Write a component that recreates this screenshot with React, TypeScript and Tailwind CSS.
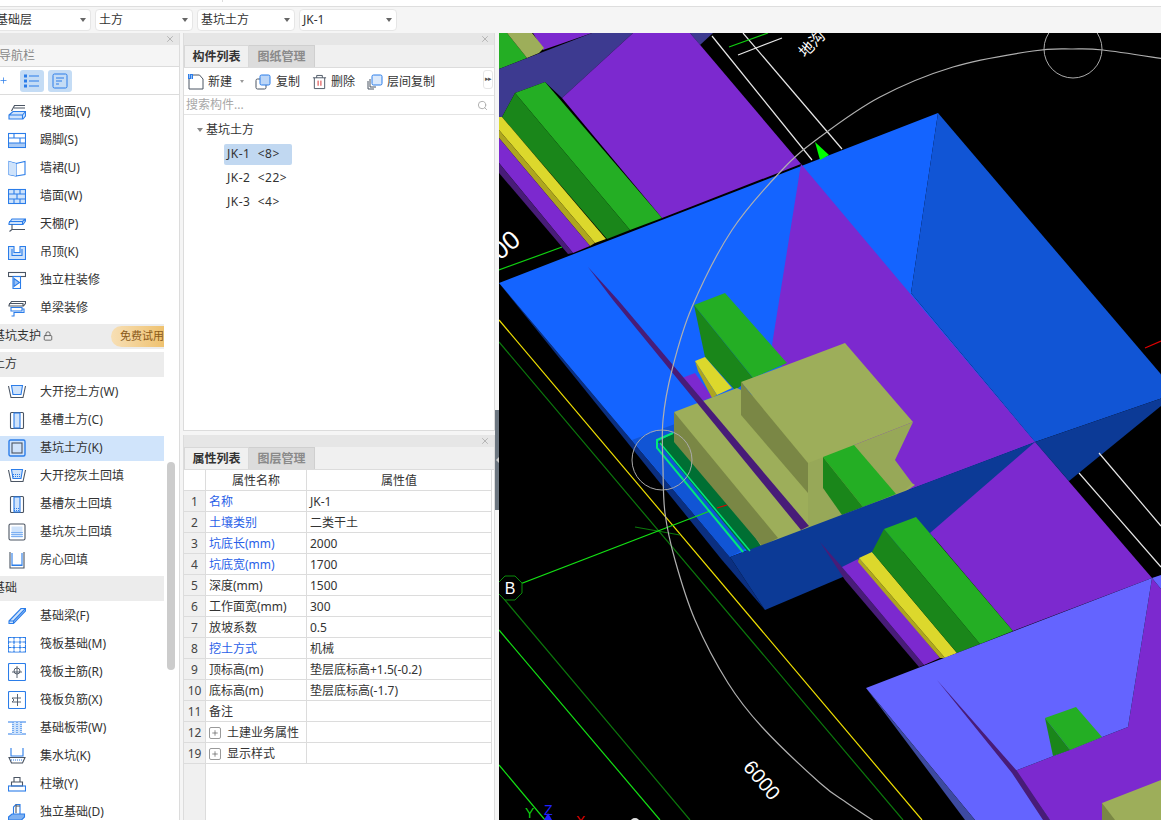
import { ReactNode } from 'react';
import { X, Search, Lock, Plus } from 'lucide-react';

const B = '#2b7de9';
const D = '#4b5563';
const L = '#cfe3fb';

const FONT = "font-['Noto_Sans','Noto_Sans_CJK_SC',sans-serif]";

function Ic({ children }: { children: ReactNode }) {
    return (
        <svg viewBox="0 0 18 18" fill="none" strokeWidth="1.1" className="w-[18px] h-[18px] shrink-0">
            {children}
        </svg>
    );
}

const dots = (x: number, y: number, w: number, h: number) => {
    const out: ReactNode[] = [];
    for (let i = 0; i < w; i += 2) for (let j = 0; j < h; j += 2) out.push(<rect key={`${i}-${j}`} x={x + i} y={y + j} width="1" height="1" fill={B} />);
    return out;
};

const icons: Record<string, ReactNode> = {
    floor: <><path d="M17 2.5H6.5L3.5 8M6 5H17" stroke={D} /><path d="M1 12L5 8.5H17.5V13L15 16H1ZM1 12H14.5V16M14.5 12L17.5 8.5" stroke={B} fill={L} /></>,
    skirt: <><rect x="0.5" y="2.5" width="17" height="14" stroke={B} /><rect x="1" y="12" width="16" height="4" fill="#a9caf5" /><path d="M0.5 7H17.5M0.5 12H17.5M6 2.5V7M12 7V12" stroke={B} /></>,
    dado: <><path d="M1 2.5L8 4.5V17L1 15.5ZM8 4.5L17 2.5V15.5L8 17" stroke={B} /><path d="M1 2.5L8 4.5V17L1 15.5Z" fill={L} /></>,
    wall: <><rect x="0.5" y="2.5" width="17" height="14" stroke={B} fill={L} /><path d="M0.5 7H17.5M0.5 12H17.5M6 2.5V7M12 2.5V7M9 7V12M6 12V16.5M12 12V16.5" stroke={B} /></>,
    ceil: <><path d="M1 8L4 4H17.5V6L15 9.5H1ZM1 6.5H14.5V9M14.5 6.5L17.5 4" stroke={B} fill={L} /><path d="M4 9.5V14.5L1.5 16.5M4 14.5H17" stroke={D} /></>,
    susp: <><path d="M0.5 3.5H6V9.5H12V3.5H17.5V16.5H0.5Z" stroke={B} fill={L} /><path d="M4 6V12.5H14V6" stroke={B} /></>,
    colf: <><rect x="0.5" y="1.5" width="17" height="4" stroke={D} /><rect x="5" y="5.5" width="7.5" height="12" stroke={B} /><path d="M6 7.5L11.5 11.5L6 15.5Z" fill="#9cc3f5" stroke={B} /></>,
    beamf: <><path d="M1 6L3.5 2.5H17.5V4.5L15.5 7H1ZM1 4.5H15V6.5" stroke={D} /><path d="M3 8.5H14V12H3ZM14 10H16V13.5H6V17H3.5" stroke={B} /></>,
    open: <><path d="M0.5 3L3 14.5H15L17.5 3" stroke={D} /><path d="M3.5 2.5H14.5L13 11.5H5Z" fill={L} stroke={B} /></>,
    trench: <><rect x="2.5" y="1.5" width="13" height="16" rx="1" stroke={D} /><rect x="6" y="2" width="6" height="15" fill={L} stroke={B} /></>,
    pit: <><rect x="1" y="1" width="16" height="16" rx="1.5" stroke={B} strokeWidth="1.4" fill={L} /><rect x="4" y="4" width="10" height="10" stroke={D} /></>,
    openf: <><path d="M0.5 3L3 14.5H15L17.5 3" stroke={D} /><path d="M3.5 2.5H14.5L13 11.5H5Z" fill={L} stroke={B} />{dots(5, 7, 8, 4)}</>,
    trenchf: <><rect x="2.5" y="1.5" width="13" height="16" rx="1" stroke={D} /><rect x="6" y="2" width="6" height="15" fill={L} stroke={B} />{dots(6, 13, 6, 4)}</>,
    pitf: <><rect x="1" y="1" width="16" height="16" rx="1.5" stroke={D} /><rect x="3.5" y="3.5" width="11" height="11" fill={L} />{dots(3.5, 9, 11, 6)}</>,
    room: <><path d="M2 1V17H16V1" stroke={D} /><path d="M4 2V14.5H14V2" stroke={B} />{dots(4.5, 13, 9, 2)}</>,
    beam: <><path d="M1 14L13 1.5H17.5V4L5.5 16.5H1ZM1 14H5.5V16.5M5.5 14L17.5 1.5" stroke={B} fill={L} /></>,
    raft: <><path d="M0.5 2.5H17.5V17H0.5ZM0.5 7H17.5M0.5 12.5H17.5M6 2.5V17M12 2.5V17" stroke={B} /><path d="M4 2.5V17M8 2.5V17M10 2.5V17M14 2.5V17M0.5 5H17.5M0.5 9.5H17.5M0.5 15H17.5" stroke="#fff" strokeWidth="0.7" /></>,
    raftm: <><rect x="0.5" y="0.5" width="17" height="17" rx="1" stroke={B} /><path d="M9 3V15M4 9H14M9 5A3 3 0 1 0 9 11M9 5A3 3 0 0 1 9 11" stroke={D} strokeWidth="0.9" /></>,
    raftn: <><rect x="0.5" y="0.5" width="17" height="17" rx="1" stroke={B} /><path d="M9.5 3V15M4 7H13M4 11H13M4 7L6 9L4 11" stroke={D} strokeWidth="0.9" /></>,
    band: <><path d="M0 3H18M0 15H18" stroke={B} /><rect x="4" y="3" width="10" height="12" fill={L} /><path d="M5 3V15M9 3V15M13 3V15" stroke={B} strokeDasharray="1 1" /></>,
    sump: <><path d="M3 1V9H15V1" stroke={B} /><path d="M1 10.5H17L14.5 16H3.5Z" stroke={D} /><path d="M3 13H15" stroke={B} strokeDasharray="1 1" /></>,
    pier: <><path d="M6 2.5H12V7H6ZM3.5 7H14.5V11H3.5Z" stroke={D} /><rect x="0.5" y="11" width="17" height="5" stroke={B} /></>,
    found: <><path d="M5.5 11V4L8 1.5H12V11" stroke={B} /><path d="M8 1.5V10M12 3H8" stroke={D} /><path d="M0.5 14L4 11H16.5V14L13.5 17H0.5Z" fill="#7fb1f1" stroke={B} /></>,
};

type Row = { label: string; icon?: string; group?: boolean; selected?: boolean };

const nav: Row[] = [
    { label: '楼地面(V)', icon: 'floor' },
    { label: '踢脚(S)', icon: 'skirt' },
    { label: '墙裙(U)', icon: 'dado' },
    { label: '墙面(W)', icon: 'wall' },
    { label: '天棚(P)', icon: 'ceil' },
    { label: '吊顶(K)', icon: 'susp' },
    { label: '独立柱装修', icon: 'colf' },
    { label: '单梁装修', icon: 'beamf' },
    { label: '基坑支护', group: true },
    { label: '土方', group: true },
    { label: '大开挖土方(W)', icon: 'open' },
    { label: '基槽土方(C)', icon: 'trench' },
    { label: '基坑土方(K)', icon: 'pit', selected: true },
    { label: '大开挖灰土回填', icon: 'openf' },
    { label: '基槽灰土回填', icon: 'trenchf' },
    { label: '基坑灰土回填', icon: 'pitf' },
    { label: '房心回填', icon: 'room' },
    { label: '基础', group: true },
    { label: '基础梁(F)', icon: 'beam' },
    { label: '筏板基础(M)', icon: 'raft' },
    { label: '筏板主筋(R)', icon: 'raftm' },
    { label: '筏板负筋(X)', icon: 'raftn' },
    { label: '基础板带(W)', icon: 'band' },
    { label: '集水坑(K)', icon: 'sump' },
    { label: '柱墩(Y)', icon: 'pier' },
    { label: '独立基础(D)', icon: 'found' },
];

const props: { no: number; name: string; value: string; blue?: boolean; expand?: boolean }[] = [
    { no: 1, name: '名称', value: 'JK-1', blue: true },
    { no: 2, name: '土壤类别', value: '二类干土', blue: true },
    { no: 3, name: '坑底长(mm)', value: '2000', blue: true },
    { no: 4, name: '坑底宽(mm)', value: '1700', blue: true },
    { no: 5, name: '深度(mm)', value: '1500' },
    { no: 6, name: '工作面宽(mm)', value: '300' },
    { no: 7, name: '放坡系数', value: '0.5' },
    { no: 8, name: '挖土方式', value: '机械', blue: true },
    { no: 9, name: '顶标高(m)', value: '垫层底标高+1.5(-0.2)' },
    { no: 10, name: '底标高(m)', value: '垫层底标高(-1.7)' },
    { no: 11, name: '备注', value: '' },
    { no: 12, name: '土建业务属性', value: '', expand: true },
    { no: 19, name: '显示样式', value: '', expand: true },
];

function Select({ label }: { label: string }) {
    return (
        <div className="w-[98px] h-[22px] bg-white border border-[#e6e6e6] rounded-[4px] flex items-center justify-between pl-[3px] pr-[3px] text-[12px] text-[#333] shrink-0">
            <span>{label}</span>
            <span className="w-0 h-0 border-x-[3px] border-x-transparent border-t-[4px] border-t-[#666] mr-[1px]" />
        </div>
    );
}

function TitleBar() {
    return (
        <div className="h-[12px] bg-[#e6e6e6] flex items-center justify-end pr-[4px] shrink-0">
            <X size={10} color="#999" strokeWidth={1.5} />
        </div>
    );
}

function Tabs({ a, b }: { a: string; b: string }) {
    return (
        <div className="h-[23px] flex bg-[#f0f0f0] border-b border-[#dcdcdc] shrink-0 text-[12px] font-bold">
            <div className="w-[65px] flex items-center justify-center border border-b-0 border-[#d8d8d8] text-[#333]">{a}</div>
            <div className="w-[66px] flex items-center justify-center bg-[#dcdcdc] border border-b-0 border-l-0 border-[#cfcfcf] text-[#8a8a8a]">{b}</div>
        </div>
    );
}

function ToolIcon({ kind }: { kind: string }) {
    if (kind === 'new') {
        return (
            <svg viewBox="0 0 16 16" fill="none" className="w-[16px] h-[16px] shrink-0">
                <path d="M1 3V15H15V5L11.5 1H5" stroke={D} />
                <rect x="0" y="0" width="5" height="5" fill={B} />
                <path d="M1 1H2M3 2H4M1 3H2M3 4H4" stroke="#fff" />
            </svg>
        );
    }
    if (kind === 'del') {
        return (
            <svg viewBox="0 0 16 16" fill="none" className="w-[15px] h-[16px] shrink-0">
                <path d="M1 3.5H15M5 3.5V1H11V3.5M2.5 3.5V15H13.5V3.5" stroke={D} />
                <path d="M6.5 6.5V12M9.5 6.5V12" stroke="#d92b2b" />
            </svg>
        );
    }
    if (kind === 'floor') {
        return (
            <svg viewBox="0 0 16 16" fill="none" className="w-[16px] h-[16px] shrink-0">
                <path d="M3 5V13H9M1 7V15H7" stroke={D} />
                <rect x="5" y="1" width="10" height="10" rx="1.5" fill="#dbe9fb" stroke={B} />
            </svg>
        );
    }
    return (
        <svg viewBox="0 0 16 16" fill="none" className="w-[16px] h-[16px] shrink-0">
            <rect x="1" y="5" width="10" height="10" rx="1.5" stroke={D} />
            <rect x="5" y="1" width="10" height="10" rx="1.5" fill="#bcd6f7" stroke={B} />
        </svg>
    );
}

const faces: [string, string][] = [
    // upper left bars
    ['#7c29cf', '533,33 592,33 543,50'],
    ['#24ae24', '499,33 507,33 527,58 499,69'],
    ['#9dae5a', '507,33 532,33 544,48 539,53 527,58'],
    ['#3d3a90', '499,69 592,33 633,33 562,98 545,82 515,93 502,117 499,117'],
    ['#3d3a90', '690,33 713,33 700,45'],
    ['#7c29cf', '633,33 690,33 801,164 662,218 562,98'],
    ['#24ae24', '515,93 545,82 662,218 630,230'],
    ['#1a861a', '515,93 630,230 607,239 502,117'],
    ['#dcd82c', '499,117 502,117 606,239 595,243 499,130'],
    ['#aea61f', '499,130 595,243 590,246 499,138'],
    ['#7c29cf', '499,138 590,246 573,253 499,163'],
    ['#481c78', '499,163 573,253 568,254 499,173'],
    // pit
    ['#0b2f80', '499,283 730,557 765,610 722,560'],
    ['#1464ff', '499,283 938,113 911,293 1035,442 730,557'],
    ['#1155d5', '938,113 1177,393 1035,442 911,293'],
    ['#0c3a96', '1035,442 1177,393 1069,481'],
    ['#7c29cf', '801,164 1035,442 850,512 772,345'],
    ['#1155d5', '632,440 675,424 770,535 730,557'],
    ['#006f33', '658,442 673,433 762,546 748,552'],
    ['#7c29cf', '682,378 695,373 712,397 700,402'],
    ['#24ae24', '694,305 725,293 787,363 753,378'],
    ['#1a861a', '694,305 753,378 735,390 705,357'],
    ['#dcd82c', '695,361 705,357 732,388 717,395'],
    ['#aea61f', '695,361 717,395 712,398 698,371'],
    // olive blocks
    ['#9dae5a', '674,412 737,388 845,440 915,485 905,492 770,560'],
    ['#7a8745', '674,412 778,538 762,546 674,442'],
    ['#97a858', '808,463 913,422 895,460 912,483 905,490 808,530'],
    ['#9dae5a', '741,382 845,343 913,422 808,463'],
    ['#7a8745', '741,382 808,463 808,493 741,415'],
    ['#481c78', '588,267 618,300 809,526 801,530 613,300'],
    ['#24ae24', '823,457 854,445 896,494 863,507'],
    ['#1a861a', '823,457 863,507 842,515 823,488'],
    // front wall
    ['#0c3a96', '730,557 1035,442 1069,481 765,610'],
    ['#7c29cf', '1035,442 1152,578 1013,631 930,533'],
    ['#481c78', '820,542 842,567 924,665 919,667 845,580'],
    ['#7c29cf', '842,567 858,559 940,658 924,665'],
    ['#aea61f', '858,562 859,558 945,658 940,658'],
    ['#dcd82c', '859,558 872,552 957,653 945,658'],
    ['#1a861a', '884,529 980,644 957,653 872,552'],
    ['#24ae24', '884,529 916,517 1013,631 980,644'],
    // next pit
    ['#7c29cf', '1152,578 1161,589 1161,820 1050,820 1015,771 1128,727'],
    ['#6464ff', '866,688 1152,578 1161,575 1161,589 1152,578 1128,727 1015,771 1050,820 975,820'],
    ['#3d4aa0', '866,688 975,820 965,820'],
    ['#481c78', '937,680 1017,771 1050,820 1043,820 1012,773'],
    ['#24ae24', '1045,718 1076,707 1102,737 1070,750'],
    ['#1a861a', '1045,718 1070,750 1053,756'],
    ['#9dae5a', '1102,803 1161,780 1161,820 1102,820'],
    ['#7a8745', '1102,803 1115,820 1102,820'],
    ['#00ff00', '815,142 829,155 820,160'],
];

const lines: [string, string, number?][] = [
    ['#e8e8e8', '712,36 812,160'],
    ['#e8e8e8', '743,33 842,149'],
    ['#e8e8e8', '1099,453 1161,526'],
    ['#e8e8e8', '1079,473 1161,567'],
    ['#e8e8e8', '738,55 782,38'],
    ['#10d010', '729,47 768,33'],
    ['#10d010', '499,270 562,247'],
    ['#f0e000', '499,320 922,820'],
    ['#0c780c', '499,342 903,820'],
    ['#0c780c', '635,527 680,535'],
    ['#0c780c', '499,593 690,820'],
    ['#14e014', '499,630 660,820'],
    ['#14e014', '499,765 545,820'],
    ['#14e014', '499,592 710,511'],
    ['#e00000', '717,508 727,505'],
    ['#e00000', '1145,348 1161,341'],
    ['#00e87a', '673,433 657,440 657,448 743,552', 2],
    ['#00e87a', '660,443 750,551', 1.5],
];

// gridline arc, measured off the picture
const arc: [number, number][] = [[1165, 59], [1103, 50], [1073, 49], [1033, 51], [953, 67], [880, 97], [820, 137], [782, 170], [732, 230], [692, 307], [672, 370], [663, 420], [663, 467], [665, 513], [675, 560], [695, 620], [728, 683], [762, 727], [820, 783], [847, 803], [880, 825]];

function smooth(pts: [number, number][]) {
    let d = `M${pts[0][0]} ${pts[0][1]}`;
    for (let i = 0; i < pts.length - 1; i++) {
        const p0 = pts[Math.max(i - 1, 0)];
        const p1 = pts[i];
        const p2 = pts[i + 1];
        const p3 = pts[Math.min(i + 2, pts.length - 1)];
        d += `C${p1[0] + (p2[0] - p0[0]) / 6} ${p1[1] + (p2[1] - p0[1]) / 6} ${p2[0] - (p3[0] - p1[0]) / 6} ${p2[1] - (p3[1] - p1[1]) / 6} ${p2[0]} ${p2[1]}`;
    }
    return d;
}

function Canvas() {
    return (
        <div className="flex-1 bg-black overflow-hidden">
            <svg viewBox="499 33 662 787" className="block w-[662px] h-[787px]" fontFamily="'Liberation Sans','Noto Sans CJK SC',sans-serif">
                {faces.map(([c, p], i) => <polygon key={i} points={p} fill={c} />)}
                {lines.map(([c, p, w], i) => <polyline key={i} points={p} fill="none" stroke={c} strokeWidth={w ?? 1.2} />)}
                <path d={smooth(arc)} fill="none" stroke="#b0b0b0" strokeWidth="1.2" />
                <circle cx="1073" cy="49" r="29" fill="none" stroke="#aaa" />
                <circle cx="662" cy="460" r="30" fill="none" stroke="#aaa" />
                <polygon points="505,576 515,576 522,583 522,593 515,600 505,600 498,593 498,583" fill="#000" stroke="#0a8a0a" />
                <text x="510" y="594" fontSize="16" fill="#fff" textAnchor="middle">B</text>
                <text x="762" y="787" fontSize="20" fill="#fff" textAnchor="middle" transform="rotate(50 762 780)">6000</text>
                <text x="518" y="249" fontSize="26" fill="#fff" textAnchor="end" transform="rotate(-40 511 240)">6000</text>
                <text x="812" y="49" fontSize="15" fill="#fff" textAnchor="middle" transform="rotate(-45 812 44)">地沟</text>
                <text x="525" y="818" fontSize="14" fill="#10d010">Y</text>
                <text x="544" y="815" fontSize="14" fill="#2020ff">Z</text>
                <text x="576" y="826" fontSize="14" fill="#e00000">X</text>
                <polygon points="548,813 552,820 544,820" fill="#2020ff" />
                <circle cx="635" cy="823" r="5" fill="#ddd" />
            </svg>
        </div>
    );
}

export default function App() {
    return (
        <div className={`w-[1161px] h-[820px] overflow-hidden bg-white text-[12px] text-[#333] flex flex-col ${FONT}`}>
            {/* Top strip */}
            <div className="h-[7px] border-b border-[#dedede] shrink-0 flex">
                <div className="ml-[222px] w-px h-[2px] bg-[#ddd]" />
            </div>
            <div className="h-[26px] bg-[#f5f5f5] flex items-center gap-[4px] shrink-0">
                <div className="w-[91px] h-[22px] bg-white border border-[#e6e6e6] border-l-0 rounded-r-[4px] flex items-center justify-between pr-[3px] shrink-0">
                    <span className="-ml-[4px]">基础层</span>
                    <span className="w-0 h-0 border-x-[3px] border-x-transparent border-t-[4px] border-t-[#666] mr-[1px]" />
                </div>
                <Select label="土方" />
                <Select label="基坑土方" />
                <Select label="JK-1" />
            </div>

            <div className="flex flex-1 min-h-0 bg-[#f5f5f5]">
                {/* Navigation */}
                <div className="w-[180px] border-r border-[#dcdcdc] bg-white flex flex-col relative overflow-hidden shrink-0">
                    <TitleBar />
                    <div className="h-[22px] bg-[#f5f5f5] border-b border-[#dcdcdc] flex items-center text-[#888] shrink-0">
                        <span className="-ml-[1px]">导航栏</span>
                    </div>
                    <div className="h-[28px] border-b border-[#dcdcdc] flex items-center shrink-0">
                        <Plus size={9} color={B} className="-ml-[1px] mr-[12px]" />
                        <div className="w-[24px] h-[22px] rounded-[3px] bg-[#c4dcf5] flex items-center justify-center">
                            <svg viewBox="0 0 16 14" fill="none" stroke={B} className="w-[16px] h-[14px]">
                                <path d="M5 2H15M5 7H15M5 12H15" />
                                <rect x="0.5" y="1" width="2" height="2" />
                                <rect x="0.5" y="6" width="2" height="2" />
                                <rect x="0.5" y="11" width="2" height="2" />
                            </svg>
                        </div>
                        <div className="ml-[4px] w-[24px] h-[22px] rounded-[3px] bg-[#c4dcf5] flex items-center justify-center">
                            <svg viewBox="0 0 16 16" fill="none" stroke={B} className="w-[16px] h-[16px]">
                                <rect x="1" y="1" width="14" height="14" rx="1.5" />
                                <path d="M4 5H12M4 8H10M4 11H7" />
                            </svg>
                        </div>
                    </div>
                    <div className="flex flex-col pt-[3px]">
                        {nav.map((r) =>
                            r.group ? (
                                <div key={r.label} className="h-[28px] py-[1.5px] w-[164px] shrink-0">
                                    <div className="h-[25px] bg-[#ececec] flex items-center justify-between">
                                        <span className="-ml-[7px] flex items-center">
                                            {r.label}
                                            {r.label === '基坑支护' && <Lock size={10} color="#555" className="ml-[2px]" />}
                                        </span>
                                        {r.label === '基坑支护' && (
                                            <span className="w-[53px] h-[21px] rounded-l-full bg-gradient-to-r from-[#f7dfb5] to-[#efc26f] text-[#8a5a1a] text-[11px] flex items-center justify-end whitespace-nowrap overflow-hidden">
                                                免费试用
                                            </span>
                                        )}
                                    </div>
                                </div>
                            ) : (
                                <div key={r.label} className="h-[28px] py-[1.5px] w-[164px] shrink-0">
                                    <div className={`h-[25px] flex items-center pl-[8px] gap-[14px] ${r.selected ? 'bg-[#d0e4fb]' : ''}`}>
                                        <Ic>{icons[r.icon!]}</Ic>
                                        <span className="whitespace-nowrap">{r.label}</span>
                                    </div>
                                </div>
                            ),
                        )}
                    </div>
                    {/* scrollbar thumb */}
                    <div className="absolute left-[167px] top-[429px] w-[8px] h-[208px] rounded-full bg-[#cccccc]" />
                </div>

                {/* Middle column */}
                <div className="w-[312px] ml-[3px] flex flex-col shrink-0">
                    <div className="h-[398px] bg-white border border-t-0 border-[#dcdcdc] flex flex-col shrink-0">
                        <TitleBar />
                        <Tabs a="构件列表" b="图纸管理" />
                        <div className="h-[28px] border-b border-[#e4e4e4] flex items-center pl-[4px] shrink-0 relative">
                            <ToolIcon kind="new" />
                            <span className="ml-[4px]">新建</span>
                            <span className="ml-[8px] w-0 h-0 border-x-[2.5px] border-x-transparent border-t-[3px] border-t-[#999]" />
                            <span className="ml-[11px] flex items-center gap-[5px]"><ToolIcon kind="copy" />复制</span>
                            <span className="ml-[12px] flex items-center gap-[4px]"><ToolIcon kind="del" />删除</span>
                            <span className="ml-[12px] flex items-center gap-[4px]"><ToolIcon kind="floor" />层间复制</span>
                            <span className="absolute right-[1px] top-[2px] w-[10px] h-[19px] bg-white border border-[#e6e6e6] rounded-[3px] text-[7px] flex items-center justify-center text-[#555] tracking-[-1px]">▸▸</span>
                        </div>
                        <div className="h-[19px] border-b border-[#e4e4e4] flex items-center justify-between pl-[2px] pr-[6px] text-[#a8a8a8] shrink-0">
                            <span>搜索构件...</span>
                            <Search size={11} color="#aaa" />
                        </div>
                        <div className="flex items-center h-[24px] mt-[3px] pl-[13px] shrink-0">
                            <span className="w-0 h-0 border-x-[3.5px] border-x-transparent border-t-[4px] border-t-[#888] mr-[3px]" />
                            基坑土方
                        </div>
                        {['JK-1  <8>', 'JK-2  <22>', 'JK-3  <4>'].map((t, i) => (
                            <div key={t} className="h-[24px] pl-[40px] flex items-center shrink-0">
                                <span className={`h-[21px] flex items-center pl-[3px] rounded-[2px] whitespace-pre tracking-[0.5px] ${i === 0 ? 'w-[68px] bg-[#c1d8f1]' : ''}`}>{t}</span>
                            </div>
                        ))}
                    </div>

                    <div className="flex-1 mt-[4px] bg-white border border-t-0 border-b-0 border-[#dcdcdc] flex flex-col min-h-0">
                        <TitleBar />
                        <Tabs a="属性列表" b="图层管理" />
                        <div className="flex-1 flex flex-col relative">
                            <div className="flex h-[21px] border-b border-r border-[#dcdcdc] w-[308px] shrink-0">
                                <div className="w-[22px] border-r border-[#dcdcdc] shrink-0" />
                                <div className="w-[101px] border-r border-[#dcdcdc] flex items-center justify-center pt-[1px] shrink-0">属性名称</div>
                                <div className="flex-1 flex items-center justify-center pt-[1px]">属性值</div>
                            </div>
                            {props.map((p) => (
                                <div key={p.no} className="flex h-[21px] border-b border-r border-[#dcdcdc] w-[308px] shrink-0">
                                    <div className="w-[22px] bg-[#f0f0f0] border-r border-[#dcdcdc] flex items-center justify-center pt-[1px] shrink-0 text-[#444]">{p.no}</div>
                                    <div className={`w-[101px] border-r border-[#dcdcdc] flex items-center pl-[3px] pt-[1px] shrink-0 whitespace-nowrap overflow-hidden ${p.blue ? 'text-[#2a5fe8]' : ''}`}>
                                        {p.expand && (
                                            <span className="w-[12px] h-[12px] mr-[6px] border border-[#999] rounded-[2px] flex items-center justify-center shrink-0">
                                                <Plus size={8} color="#555" />
                                            </span>
                                        )}
                                        {p.name}
                                    </div>
                                    <div className="flex-1 flex items-center pl-[3px] pt-[1px] whitespace-nowrap">{p.value}</div>
                                </div>
                            ))}
                            <div className="flex-1 w-[22px] bg-[#f0f0f0] border-r border-[#dcdcdc]" />
                        </div>
                    </div>
                </div>

                {/* Splitter */}
                <div className="w-[4px] shrink-0 bg-[#f5f5f5]">
                    <div className="mt-[377px] h-[100px] bg-[#6c7680] flex items-center justify-center">
                        <span className="w-0 h-0 border-y-[3px] border-y-transparent border-r-[3px] border-r-[#ccc]" />
                    </div>
                </div>

                <Canvas />
            </div>
        </div>
    );
}
